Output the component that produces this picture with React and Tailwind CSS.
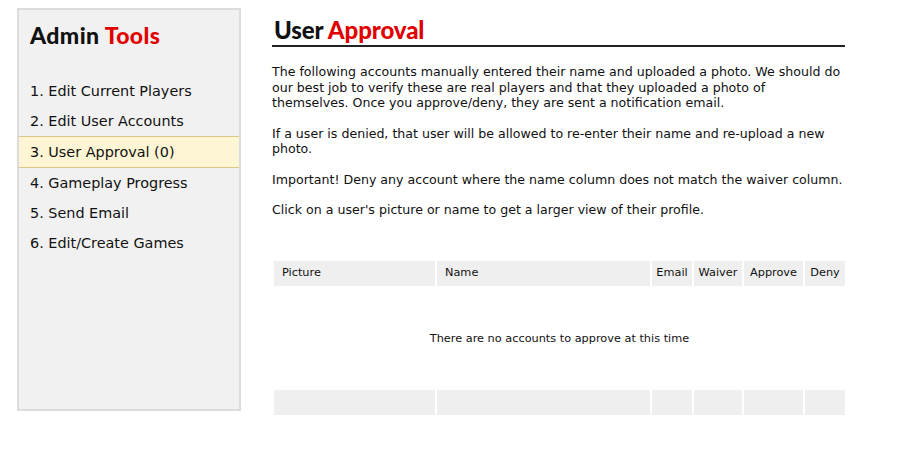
const menu = [
  "1. Edit Current Players",
  "2. Edit User Accounts",
  "3. User Approval (0)",
  "4. Gameplay Progress",
  "5. Send Email",
  "6. Edit/Create Games",
];

const cols = [
  { label: "Picture", cls: "w-[161px] pl-2 text-left" },
  { label: "Name", cls: "w-[213px] pl-2 text-left" },
  { label: "Email", cls: "w-[40px] text-center" },
  { label: "Waiver", cls: "w-[48px] text-center" },
  { label: "Approve", cls: "w-[59px] text-center" },
  { label: "Deny", cls: "w-[40px] text-center" },
];

function Sidebar() {
  return (
    <div className="w-[224px] h-[403px] shrink-0 border-2 border-[#dcdcdc] bg-[#f1f1f1]">
      <h2 className="pl-[11px] pt-[12px] text-[23px] font-black leading-[26px] tracking-[0.4px] text-[#111] font-['Lato',sans-serif]">
        Admin <span className="text-[#e00000]">Tools</span>
      </h2>
      <ul className="mt-[28px]">
        {menu.map((item, i) => (
          <li
            key={item}
            className={
              "pl-[11px] pt-[2px] flex items-center text-[14.4px] text-[#111] " +
              (i === 2 ? "h-[32px] bg-[#fdf5d3] border-y border-[#dcc98a]" : "h-[30px]")
            }
          >
            {item}
          </li>
        ))}
      </ul>
    </div>
  );
}

export default function App() {
  return (
    <div className="flex pl-[17px] pt-[8px] font-['DejaVu_Sans',sans-serif] text-[#111]">
      <Sidebar />

      <div className="ml-[31px] w-[573px] pt-[7px]">
        <h1 className="pl-[2px] text-[24px] font-black leading-[30px] tracking-[-0.1px] font-['Lato',sans-serif] border-b-2 border-[#222]">
          User <span className="text-[#e00000]">Approval</span>
        </h1>

        <div className="mt-[17px] text-[12.6px] leading-[15.5px] space-y-[15px]">
          <p>
            The following accounts manually entered their name and uploaded a
            photo. We should do our best job to verify these are real players
            and that they uploaded a photo of themselves. Once you
            approve/deny, they are sent a notification email.
          </p>
          <p>
            If a user is denied, that user will be allowed to re-enter their
            name and re-upload a new photo.
          </p>
          <p>
            Important! Deny any account where the name column does not match
            the waiver column.
          </p>
          <p>Click on a user's picture or name to get a larger view of their profile.</p>
        </div>

        <div className="mt-[43px] pl-[2px] text-[11.3px]">
          <div className="flex gap-[2px]">
            {cols.map((c) => (
              <div key={c.label} className={"h-[25px] bg-[#efefef] flex items-center " + c.cls}>
                <span className={c.cls.includes("center") ? "w-full" : ""}>{c.label}</span>
              </div>
            ))}
          </div>
          <div className="h-[106px] pt-[2px] flex items-center justify-center">
            There are no accounts to approve at this time
          </div>
          <div className="flex gap-[2px] -mt-[2px]">
            {cols.map((c) => (
              <div key={c.label} className={"h-[25px] bg-[#efefef] " + c.cls} />
            ))}
          </div>
        </div>
      </div>
    </div>
  );
}
